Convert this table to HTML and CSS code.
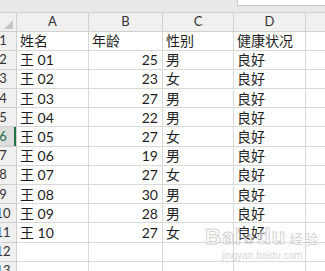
FILE: index.html
```html
<!DOCTYPE html>
<html lang="zh">
<head>
  <meta charset="UTF-8" />
  <title>健康状况</title>
  <link rel="stylesheet" href="styles.css">
</head>
<body>
  <div class="toolbar"><div class="formula"></div></div>

  <div class="sheet">
    <table class="grid">
      <colgroup>
        <col class="c-row"><col class="c-a"><col class="c-b"><col class="c-c"><col class="c-d"><col class="c-e">
      </colgroup>
      <thead>
        <tr>
          <th class="corner"><span class="tri"></span></th>
          <th>A</th><th>B</th><th>C</th><th>D</th><th></th>
        </tr>
      </thead>
      <tbody>
        <tr><th>1</th><td>姓名</td><td>年龄</td><td>性别</td><td>健康状况</td><td></td></tr>
        <tr><th>2</th><td>王 01</td><td class="num">25</td><td>男</td><td>良好</td><td></td></tr>
        <tr><th>3</th><td>王 02</td><td class="num">23</td><td>女</td><td>良好</td><td></td></tr>
        <tr><th>4</th><td>王 03</td><td class="num">27</td><td>男</td><td>良好</td><td></td></tr>
        <tr><th>5</th><td>王 04</td><td class="num">22</td><td>男</td><td>良好</td><td></td></tr>
        <tr class="active"><th>6</th><td>王 05</td><td class="num">27</td><td>女</td><td>良好</td><td></td></tr>
        <tr><th>7</th><td>王 06</td><td class="num">19</td><td>男</td><td>良好</td><td></td></tr>
        <tr><th>8</th><td>王 07</td><td class="num">27</td><td>女</td><td>良好</td><td></td></tr>
        <tr><th>9</th><td>王 08</td><td class="num">30</td><td>男</td><td>良好</td><td></td></tr>
        <tr><th>10</th><td>王 09</td><td class="num">28</td><td>男</td><td>良好</td><td></td></tr>
        <tr><th>11</th><td>王 10</td><td class="num">27</td><td>女</td><td>良好</td><td></td></tr>
        <tr><th>12</th><td></td><td></td><td></td><td></td><td></td></tr>
        <tr><th>13</th><td></td><td></td><td></td><td></td><td></td></tr>
      </tbody>
    </table>

    <div class="watermark">
      <div class="wm-logo">Bai<span class="paw">&#10047;</span>du<span class="wm-cn">经验</span></div>
      <div class="wm-url">jingyan.baidu.com</div>
    </div>
  </div>
</body>
</html>
```

FILE: styles.css
```css
html, body { margin: 0; padding: 0; background: #fff; overflow: hidden; }
body { font-family: "Lato", "Noto Sans CJK SC", sans-serif; color: #222; }

/* strip above the grid, with the bottom of the formula box */
.toolbar { height: 13px; background: #e9e9e9; border-bottom: 1px solid #d0d0d0; box-sizing: border-box; position: relative; }
.formula { position: absolute; left: 237px; right: -2px; top: -1px; height: 5px; background: #fff; border: 1px solid #c9c9c9; }

.sheet { position: relative; overflow: hidden; }

/* row-number column runs off the left edge */
.grid { border-collapse: collapse; table-layout: fixed; margin-left: -11px; width: 361px; }
.c-row { width: 27px; }
.c-a { width: 72px; }
.c-b { width: 74px; }
.c-c { width: 71px; }
.c-d { width: 72px; }
.c-e { width: 45px; }

.grid th, .grid td { border: 1px solid #d9d9d9; padding: 0 3px; height: 18px; box-sizing: border-box; white-space: nowrap; overflow: hidden; line-height: 17px; }
.grid td { font-size: 14px; font-weight: 400; color: #1e1e1e; }
.grid td.num { text-align: right; padding-right: 4px; }

.grid thead th { height: 18px; background: #f0f0f0; font-weight: 400; font-size: 13px; color: #333; text-align: center; border-color: #cfcfcf; border-top: none; }
.grid tbody th { background: #f0f0f0; font-weight: 400; font-size: 13px; color: #333; text-align: center; border-color: #cfcfcf; padding: 0; }
.grid tbody tr { height: 19.2px; }

.corner { position: relative; }
.tri { position: absolute; right: 3px; bottom: 2px; width: 0; height: 0; border-left: 9px solid transparent; border-bottom: 9px solid #c8c8c8; }

/* selected row header */
.grid tr.active th { background: #dcdcdc; color: #217346; box-shadow: inset -2px 0 0 #217346; }

.watermark { position: absolute; left: 205px; top: 213px; pointer-events: none; text-align: center; }
.wm-logo { font-family: "Liberation Sans", sans-serif; font-size: 22px; font-weight: 700; letter-spacing: 1px; line-height: 22px; color: rgba(255, 255, 255, 0.6); -webkit-text-stroke: 1px rgba(170, 170, 170, 0.55); }
.paw { font-size: 14px; margin: 0 1px; color: rgba(170, 170, 170, 0.45); -webkit-text-stroke: 0; }
.wm-cn { font-family: "Noto Sans CJK SC", sans-serif; font-size: 14px; font-weight: 400; margin-left: 3px; color: rgba(170, 170, 170, 0.5); -webkit-text-stroke: 0; }
.wm-url { font-family: "Liberation Sans", sans-serif; font-size: 10px; line-height: 10px; margin-top: 1px; color: rgba(175, 175, 175, 0.55); }
```
